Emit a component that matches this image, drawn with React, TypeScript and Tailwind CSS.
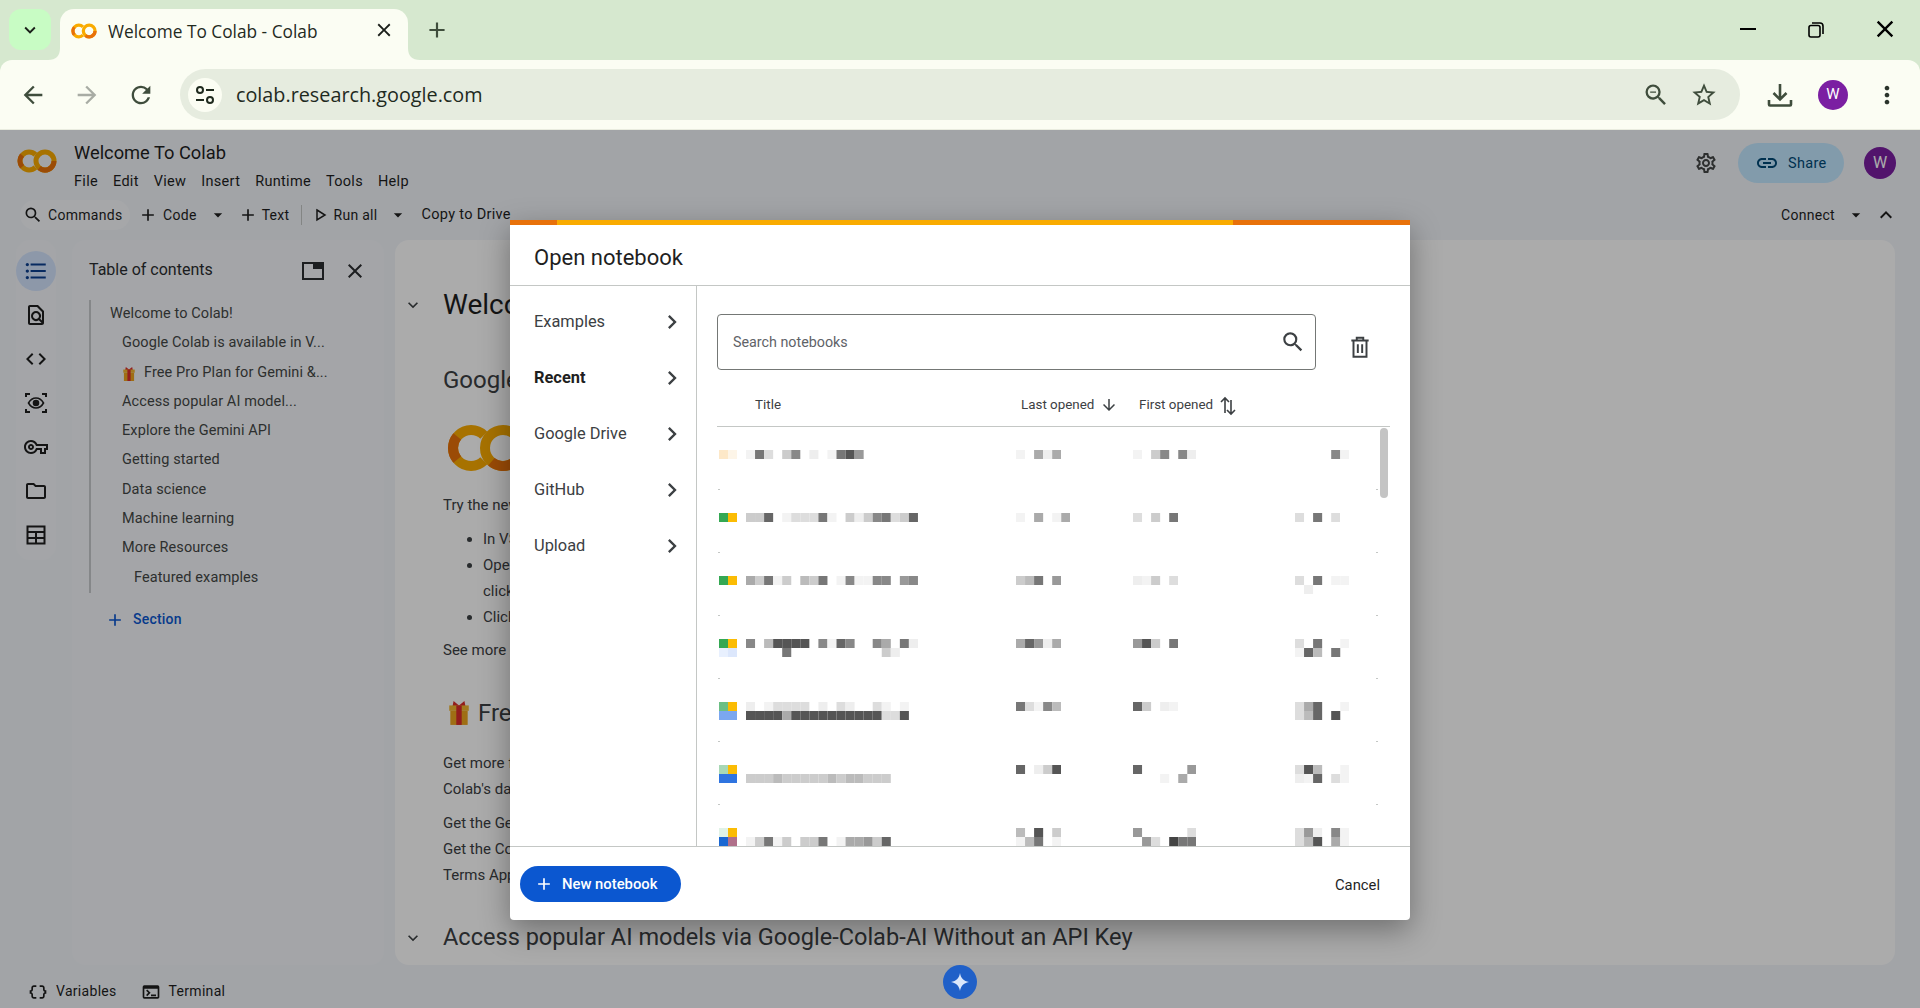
import React from 'react';
import {
  MdAdd, MdArrowBack, MdArrowDownward, MdArrowDropDown, MdArrowForward, MdChevronRight, MdClose, MdCode,
  MdExpandLess, MdExpandMore, MdFormatListBulleted, MdLink, MdMoreVert,
  MdOutlineFindInPage, MdOutlineFolder, MdOutlineSettings, MdOutlineStarBorder,
  MdOutlineVpnKey, MdRefresh, MdSearch, MdZoomOut, MdDataObject, MdOutlineTerminal,
} from 'react-icons/md';

// Colab logo: C and O rings
const CoLogo = ({ className }: { className: string }) => (
  <svg viewBox="0 0 40 24" className={className} fill="none" strokeWidth="5">
    <path d="M18.4 5.600A9 9 0 1 0 18.400 18.400" stroke="#f9ab00" />
    <path d="M5.100 6.200A9 9 0 0 0 5.100 17.800" stroke="#e8710a" />
    <circle cx="28" cy="12" r="9" stroke="#f9ab00" />
    <path d="M37 12A9 9 0 0 1 22.200 18.900" stroke="#e8710a" />
  </svg>
);

const Gift = ({ className }: { className: string }) => (
  <svg viewBox="0 0 22 24" className={className}>
    <path d="M6 1l5 4 5-4 1 5H5z" fill="#db2c2c" />
    <rect x="2" y="5" width="18" height="5" fill="#f2b632" />
    <rect x="3" y="10" width="16" height="13" fill="#eda41f" />
    <rect x="8.500" y="5" width="5" height="18" fill="#db2c2c" />
  </svg>
);

const EyeScan = () => (
  <svg viewBox="0 0 24 24" className="w-6 h-6" fill="none" stroke="currentColor" strokeWidth="2">
    <path d="M2 6V3h4M18 3h4v3M22 18v3h-4M6 21H2v-3" />
    <path d="M4.500 12C6.500 8.500 9 7 12 7s5.500 1.500 7.500 5c-2 3.500-4.500 5-7.500 5s-5.500-1.500-7.500-5z" strokeWidth="1.600" />
    <circle cx="12" cy="12" r="2.300" fill="currentColor" />
  </svg>
);

const TableIcon = () => (
  <svg viewBox="0 0 24 24" className="w-6 h-6" fill="none" stroke="currentColor" strokeWidth="2">
    <path d="M3.500 3.500h17v17h-17zM3.500 9h17M3.500 15h17M12 9v11.500" />
  </svg>
);

const DockIcon = () => (
  <svg viewBox="0 0 22 18" className="w-[22px] h-[18px]">
    <path d="M1 1h20v16H1z" fill="none" stroke="#2b2d30" strokeWidth="2" />
    <path d="M11 1h10v6H11z" fill="#2b2d30" />
  </svg>
);

const SiteIcon = () => (
  <svg viewBox="0 0 24 24" className="w-[24px] h-[24px]" fill="none" stroke="#1f2a1e" strokeWidth="2">
    <circle cx="7" cy="7" r="3" />
    <path d="M13 7h8M3 17h8" />
    <circle cx="17" cy="17" r="3" />
  </svg>
);

const DownloadIcon = () => (
  <svg viewBox="0 0 26 26" className="w-[26px] h-[26px]" fill="none" stroke="#3f4d3c" strokeWidth="2.600">
    <path d="M13 2v15M6.500 11l6.500 6.500 6.500-6.500" />
    <path d="M2 18v4.500a1 1 0 0 0 1 1h20a1 1 0 0 0 1-1V18" />
  </svg>
);

const RestoreIcon = () => (
  <svg viewBox="0 0 16 16" className="w-4 h-4" fill="none" stroke="#000" strokeWidth="1.600">
    <rect x="1" y="3.500" width="11" height="11.500" rx="2" />
    <path d="M4 1h8a3 3 0 0 1 3 3v8" />
  </svg>
);

// Trash can with the two inner bars
const TrashIcon = () => (
  <svg viewBox="0 0 24 24" className="ml-[31px] mt-[20px] w-[26px] h-[26px]" fill="none" stroke="#3c4043" strokeWidth="1.800">
    <path d="M4 6h16M9 6V3.500h6V6M6 6v15h12V6M10 9.500v8M14 9.500v8" />
  </svg>
);

const gray = (c: string) => {
  if (c === '.') return 'none';
  if (c === 'f') return '#f3f3f3';
  return `#${c}${c}${c}`;
};

// blurred-out cells: one string per line, one hex digit per cell
const Mosaic = ({ lines }: { lines: string[] }) => {
  const w = Math.max(...lines.map((l) => l.length));
  return (
    <svg width={w * 9.05} height={lines.length * 9} className="shrink-0 blur-[0.4px]">
      {lines.map((l, y) =>
        l.split('').map((c, x) => <rect key={x} x={x * 9.05} y={y * 9} width="9.050" height="9" fill={gray(c)} />),
      )}
    </svg>
  );
};

const FileIcon = ({ cells }: { cells: string[][] }) => (
  <svg width="18" height="18" className="shrink-0 blur-[0.4px]">
    {cells.map((r, y) => r.map((c, x) => <rect key={x} x={x * 9} y={y * 9} width="9" height="9" fill={c} />))}
  </svg>
);

const rows = [
  { icon: [['#fde8c8', '#fdf5e8']], title: ['f7d.c8.e.f759'], a: ['f.aea'], b: ['f.c8.8e'], c: ['....8f'] },
  { icon: [['#34a853', '#fbbc04']], title: ['cc6.fddd7f.cec87dc6'], a: ['f.a.fa'], b: ['d.c.7'], c: ['d.7.d'] },
  { icon: [['#34a853', '#fbbc04']], title: ['ac7fc.bc7.f8ff88.98'], a: ['cb7.9'], b: ['efc.d'], c: ['d.7.ff', '.e'] },
  {
    icon: [['#34a853', '#fbbc04'], ['#e8f0fe', '#dce7fc']],
    title: ['8.b5555.8f68..8a.7e', '....7..........ce'],
    a: ['a69ea'], b: ['95c.7'], c: ['d.7..f', 'f6b.7'],
  },
  {
    icon: [['#6cbf84', '#fbbc04'], ['#7ba7f0', '#7ba7f0']],
    title: ['e.fdddd.e.de..df.f', '5555a5555555555dd5'],
    a: ['7df8b'], b: ['6c.ef'], c: ['da6..f', 'db6.5'],
  },
  {
    icon: [['#a8d8b5', '#fbbc04'], ['#2f74e0', '#2f74e0']],
    title: ['', 'cccbcccccbcbbccc'],
    a: ['6.ec5'], b: ['6.....9', '...f.a'], c: ['d5b..f', 'ef6.df'],
  },
  {
    icon: [['#e0f2e6', '#fbbc04'], ['#1967d2', '#b0708a']],
    title: ['', 'fc7fc.cc7.faa9c6'],
    a: ['b.5.c', 'fb7.f'], b: ['9.....d', '.9d.477'], c: ['d9e.8f', 'db5.af'],
  },
];

const tocItems = [
  { label: 'Google Colab is available in V...', pad: 'pl-[31px]' },
  { label: 'Free Pro Plan for Gemini &...', pad: 'pl-[31px]', gift: true },
  { label: 'Access popular AI model...', pad: 'pl-[31px]' },
  { label: 'Explore the Gemini API', pad: 'pl-[31px]' },
  { label: 'Getting started', pad: 'pl-[31px]' },
  { label: 'Data science', pad: 'pl-[31px]' },
  { label: 'Machine learning', pad: 'pl-[31px]' },
  { label: 'More Resources', pad: 'pl-[31px]' },
  { label: 'Featured examples', pad: 'pl-[43px]' },
];

const App: React.FC = () => {
  return (
    <div className="w-[1920px] h-[1008px] overflow-hidden flex flex-col bg-[#d6e8cf] font-['Roboto',sans-serif] text-[#1f1f1f]">
      {/* Tab strip */}
      <div className="h-[60px] shrink-0 flex items-start pt-[9px] pl-[9px] pr-0 font-['Open_Sans',sans-serif]">
        <div className="w-[42px] h-[41px] rounded-[12px] bg-[#c8fcc4] flex items-center justify-center">
          <MdExpandMore className="w-[22px] h-[22px] text-[#1b1f1a]" />
        </div>
        <div className="relative ml-[9px] w-[348px] h-[51px] rounded-t-[14px] bg-[#fbfdf3] flex items-start pt-[11px] pl-[11px]">
          <CoLogo className="w-[26px] h-[16px] mt-[3px]" />
          <span className="ml-[11px] text-[17.300px] leading-[24px] text-[#1f2a1e]">Welcome To Colab - Colab</span>
          <MdClose className="absolute left-[313px] top-[10px] w-[22px] h-[22px] text-[#1b1f1a]" />
          <svg viewBox="0 0 12 12" className="absolute -left-[12px] bottom-0 w-3 h-3"><path d="M12 0v12H0C8 12 12 8 12 0z" fill="#fbfdf3" /></svg>
          <svg viewBox="0 0 12 12" className="absolute -right-[12px] bottom-0 w-3 h-3"><path d="M0 0v12h12C4 12 0 8 0 0z" fill="#fbfdf3" /></svg>
        </div>
        <MdAdd className="ml-[16px] mt-[8px] w-[26px] h-[26px] text-[#3f4d3c]" />
        <div className="ml-auto flex items-center h-[40px] text-black">
          <div className="w-4 h-[2px] bg-black mr-[52px]" />
          <div className="mr-[47px] mt-[2px]"><RestoreIcon /></div>
          <MdClose className="w-[28px] h-[28px] mr-[21px]" />
        </div>
      </div>

      {/* Browser toolbar */}
      <div className="h-[70px] shrink-0 rounded-t-[12px] bg-[#fbfdf3] border-b border-[#e9ecdf] flex items-center text-[#3f4d3c]">
        <MdArrowBack className="ml-[19px] w-7 h-7" />
        <MdArrowForward className="ml-[26px] w-7 h-7 text-[#a8aca4]" />
        <MdRefresh className="ml-[26px] w-7 h-7" />
        <div className="ml-[25px] w-[1560px] h-[51px] rounded-full bg-[#e6ecdf] flex items-center pl-[8px]">
          <div className="w-[34px] h-[34px] rounded-full bg-[#fbfdf3] flex items-center justify-center">
            <SiteIcon />
          </div>
          <span className="ml-[14px] text-[19.800px] text-[#1f2a1e] font-['Open_Sans',sans-serif]">colab.research.google.com</span>
          <MdZoomOut className="ml-auto w-7 h-7" />
          <MdOutlineStarBorder className="ml-[20px] mr-[22px] w-7 h-7" />
        </div>
        <div className="ml-[27px]"><DownloadIcon /></div>
        <div className="ml-[25px] w-[30px] h-[30px] rounded-full bg-[#7b1fa2] text-white text-[15px] flex items-center justify-center">W</div>
        <MdMoreVert className="ml-[25px] w-7 h-7 text-[#2a332a]" />
      </div>

      {/* Colab page */}
      <div className="relative flex-1 bg-[#f2f5fa] flex flex-col">
        <div className="h-[70px] shrink-0 flex items-start pl-[17px]">
          <CoLogo className="mt-[19px] w-[40px] h-[24px]" />
          <div className="ml-[17px] mt-[10px]">
            <div className="text-[18.300px] leading-[26px]">Welcome To Colab</div>
            <div className="mt-[6px] flex gap-[15px] text-[14.500px] leading-[20px] tracking-[0.3px]">
              <span>File</span><span>Edit</span><span>View</span><span>Insert</span><span>Runtime</span><span>Tools</span><span>Help</span>
            </div>
          </div>
          <MdOutlineSettings className="ml-auto mt-[21px] w-[24px] h-[24px] text-[#444746]" />
          <div className="ml-[20px] mt-[13px] w-[106px] h-[40px] rounded-full bg-[#c2e7ff] text-[#004a77] flex items-center pl-[17px] gap-[9px] text-[14.500px] tracking-[0.3px]">
            <MdLink className="w-6 h-6" /> <span className="mt-[2px]">Share</span>
          </div>
          <div className="ml-[20px] mr-[24px] mt-[17px] w-[32px] h-[32px] rounded-full bg-[#7b1fa2] text-white text-[16px] flex items-center justify-center">W</div>
        </div>

        <div className="h-[30px] shrink-0 flex items-center text-[14px] tracking-[0.3px] pl-[20px]">
          <div className="w-[110px] h-[30px] rounded-full bg-[#f8fafd] flex items-center pl-[3px] gap-[5px]">
            <MdSearch className="w-5 h-5" /> Commands
          </div>
          <MdAdd className="ml-[8px] w-5 h-5" /><span className="ml-[5px]">Code</span>
          <MdArrowDropDown className="ml-[11px] w-5 h-5" />
          <MdAdd className="ml-[10px] w-5 h-5" /><span className="ml-[4px]">Text</span>
          <div className="ml-[12px] w-px h-[20px] bg-[#c4c7c5]" />
          <svg viewBox="0 0 12 14" className="ml-[13px] w-[12px] h-[14px]" fill="none" stroke="#1f1f1f" strokeWidth="1.500"><path d="M2 2l8 5-8 5z" /></svg>
          <span className="ml-[6px]">Run all</span>
          <MdArrowDropDown className="ml-[10px] w-5 h-5" />
          <span className="ml-[14px] text-[14.500px]">Copy to Drive</span>
          <span className="ml-auto">Connect</span>
          <MdArrowDropDown className="ml-[11px] w-5 h-5" />
          <MdExpandLess className="ml-[8px] mr-[22px] w-6 h-6" />
        </div>

        <div className="mt-[10px] h-[725px] flex pl-[16px] pr-[25px]">
          {/* Rail */}
          <div className="w-[40px] h-[320px] rounded-[14px] bg-[#f5f7fb] flex flex-col items-center text-[#1f1f1f]">
            <div className="w-[40px] h-[40px] mt-[11px] rounded-full bg-[#d3e3fd] flex items-center justify-center">
              <MdFormatListBulleted className="w-[26px] h-[26px] text-[#0b3f8f]" />
            </div>
            <MdOutlineFindInPage className="mt-[12px] w-6 h-6" />
            <MdCode className="mt-[20px] w-6 h-6" />
            <div className="mt-[20px]"><EyeScan /></div>
            <MdOutlineVpnKey className="mt-[20px] w-6 h-6" />
            <MdOutlineFolder className="mt-[20px] w-6 h-6" />
            <div className="mt-[20px]"><TableIcon /></div>
          </div>

          {/* Table of contents */}
          <div className="ml-[16px] w-[312px] rounded-[14px] bg-[#f5f7fb] pt-[19px] pl-[17px] pr-[15px]">
            <div className="flex items-center h-[22px]">
              <span className="text-[16px] text-[#2b2d30]">Table of contents</span>
              <div className="ml-auto mt-[2px]"><DockIcon /></div>
              <MdClose className="ml-[19px] mr-[2px] mt-[2px] w-[24px] h-[24px] text-[#2b2d30]" />
            </div>
            <div className="mt-[19px] h-[293px] border-l-2 border-[#c7c9cc] text-[14.500px] tracking-[0.1px] leading-[20px] text-[#444746] w-[280px] pt-[4px]">
              <div className="h-[29.300px] pl-[19px]">Welcome to Colab!</div>
              {tocItems.map((t) => (
                <div key={t.label} className={`h-[29.300px] flex items-start ${t.pad}`}>
                  {t.gift && <Gift className="w-[14px] h-[16px] mt-[3px] mr-[8px]" />}
                  {t.label}
                </div>
              ))}
            </div>
            <div className="mt-[16px] ml-[16px] flex items-center gap-[8px] text-[14px] tracking-[0.2px] font-medium text-[#0b57d0]">
              <MdAdd className="w-5 h-5" /> Section
            </div>
          </div>

          {/* Notebook */}
          <div className="ml-[11px] flex-1 rounded-[14px] bg-white pt-[44px] pl-[48px] text-[#3c4043] overflow-hidden relative">
            <div className="flex items-center h-[42px]">
              <MdExpandMore className="-ml-[40px] mr-[20px] w-5 h-5" />
              <span className="text-[28px] text-[#1f1f1f]">Welcome to Colab!</span>
            </div>
            <div className="mt-[38px] text-[24px] leading-[32px]">Google Colab is available in VS Code!</div>
            <CoLogo className="mt-[28px] ml-[4px] w-[80px] h-[48px]" />
            <div className="mt-[21px] text-[15px] leading-[24px]">Try the new Google Colab extension for Visual Studio Code.</div>
            <ul className="mt-[9px] ml-[25px] list-disc text-[15px] leading-[26px] pl-[15px]">
              <li>In VS Code, open the Extensions view and search for Google Colab</li>
              <li>Open a notebook, then<br />click Select Kernel and pick Colab</li>
              <li>Click Connect to start</li>
            </ul>
            <div className="mt-[8px] text-[15px] leading-[24px]">See more details in our announcement.</div>
            <div className="mt-[35px] flex items-center gap-[7px] text-[24px] leading-[32px]">
              <Gift className="w-[24px] h-[26px] ml-[4px]" /> Free Pro Plan for Gemini &amp; more
            </div>
            <div className="mt-[21px] text-[15px] leading-[26px] whitespace-nowrap">
              Get more from Google AI with a free one-year Pro plan for students, with extended Gemini access and higher limits in many tools, which then may<br />Colab's daily quota
            </div>
            <div className="mt-[8px] text-[15px] leading-[26px]">
              Get the Gemini offer<br />Get the Colab offer<br />Terms Apply
            </div>
            <div className="mt-[32px] flex items-center h-[36px]">
              <MdExpandMore className="-ml-[40px] mr-[20px] w-5 h-5" />
              <span className="text-[23.550px]">Access popular AI models via Google-Colab-AI Without an API Key</span>
            </div>
          </div>
        </div>

        <div className="flex-1 flex items-center pl-[28px] pt-[10px] text-[14px] tracking-[0.3px]">
          <MdDataObject className="w-5 h-5" /><span className="ml-[8px]">Variables</span>
          <MdOutlineTerminal className="ml-[24px] w-5 h-5" /><span className="ml-[8px]">Terminal</span>
        </div>

        {/* Scrim */}
        <div className="absolute inset-0 bg-black/[.33]" />

        <div className="absolute left-[943px] top-[835px] w-[34px] h-[34px] rounded-full bg-[#2060c8] flex items-center justify-center">
          <svg viewBox="0 0 20 20" className="w-[20px] h-[20px]"><path d="M10 1c.8 5 3.500 8 9 9-5.500 1-8.200 4-9 9-.8-5-3.500-8-9-9 5.500-1 8.200-4 9-9z" fill="#dbe7fb" /></svg>
        </div>

        {/* Open notebook dialog */}
        <div className="absolute left-[510px] top-[90px] w-[900px] h-[700px] bg-white rounded-b-[4px] shadow-[0_10px_30px_rgba(0,0,0,0.35)] flex flex-col overflow-hidden">
          <div className="h-[5px] shrink-0 flex">
            <div className="w-[47px] bg-[#e8710a]" />
            <div className="flex-1 bg-[#f9ab00]" />
            <div className="w-[177px] bg-[#e8710a]" />
          </div>
          <div className="h-[61px] shrink-0 border-b border-[#c4c7c5] pl-6 pt-[5px] flex items-center text-[22px] text-[#1f1f1f]">Open notebook</div>
          <div className="h-[560px] shrink-0 flex">
            <div className="w-[187px] shrink-0 border-r border-[#c4c7c5] pt-[8px] text-[16.400px] text-[#3c4043]">
              {['Examples', 'Recent', 'Google Drive', 'GitHub', 'Upload'].map((n) => (
                <div key={n} className={`h-[56px] pl-6 pr-[10px] flex items-center justify-between ${n === 'Recent' ? 'font-bold text-[#1f1f1f]' : ''}`}>
                  {n}
                  <MdChevronRight className="w-[28px] h-[28px] text-[#3c4043]" />
                </div>
              ))}
            </div>
            <div className="flex-1 pl-5 flex flex-col min-w-0">
              <div className="flex items-start mt-[28px]">
                <div className="w-[599px] h-[56px] rounded-[4px] border border-[#747775] flex items-center pl-[15px] pr-[9px] text-[14.300px] text-[#5f6368]">
                  <span className="mt-[2px]">Search notebooks</span>
                  <MdSearch className="ml-auto w-[26px] h-[26px] text-[#3c4043]" />
                </div>
                <TrashIcon />
              </div>
              <div className="w-[673px] h-[57px] shrink-0 border-b border-[#c4c7c5] flex items-start pt-[25px] pl-[38px] text-[13.400px] leading-[20px] text-[#3c4043]">
                <span className="w-[266px]">Title</span>
                <span className="w-[118px] h-5 flex items-center">Last opened<MdArrowDownward className="ml-[6px] w-[18px] h-[18px]" /></span>
                <span className="h-5 flex items-center">First opened
                  <svg viewBox="0 0 18 22" className="ml-[6px] mt-[1px] w-[18px] h-[22px]" fill="none" stroke="#3c4043" strokeWidth="1.600"><path d="M6 18V3M2 7l4-4 4 4M12 5v14M8 15l4 4 4-4" /></svg>
                </span>
              </div>
              <div className="relative w-[673px] h-[419px] overflow-hidden">
                {rows.map((r, i) => (
                  <div key={i} className="h-[63px] flex flex-col">
                    <div className="h-[62px] pt-[23px] pl-[2px] grid grid-cols-[297px_117px_162px_1fr]">
                      <div className="flex items-start gap-[9px]"><FileIcon cells={r.icon} /><Mosaic lines={r.title} /></div>
                      <Mosaic lines={r.a} />
                      <Mosaic lines={r.b} />
                      <Mosaic lines={r.c} />
                    </div>
                    <div className="h-px flex justify-between pl-px pr-[12px]">
                      <span className="w-[2px] bg-[#c4c7c5]" /><span className="w-[2px] bg-[#c4c7c5]" />
                    </div>
                  </div>
                ))}
                <div className="absolute left-[663px] top-[1px] w-[8px] h-[70px] rounded-full bg-[#c4c4c4]" />
              </div>
            </div>
          </div>
          <div className="flex-1 border-t border-[#c4c7c5] flex items-center pl-[10px] pr-[30px] pt-[1px]">
            <div className="w-[161px] h-[36px] rounded-full bg-[#0b57d0] text-white text-[14.800px] font-medium flex items-center pl-[14px] gap-[8px]">
              <MdAdd className="w-5 h-5" /> New notebook
            </div>
            <span className="ml-auto mt-[2px] text-[14.800px] text-[#1f1f1f]">Cancel</span>
          </div>
        </div>
      </div>
    </div>
  );
};

export default App;
